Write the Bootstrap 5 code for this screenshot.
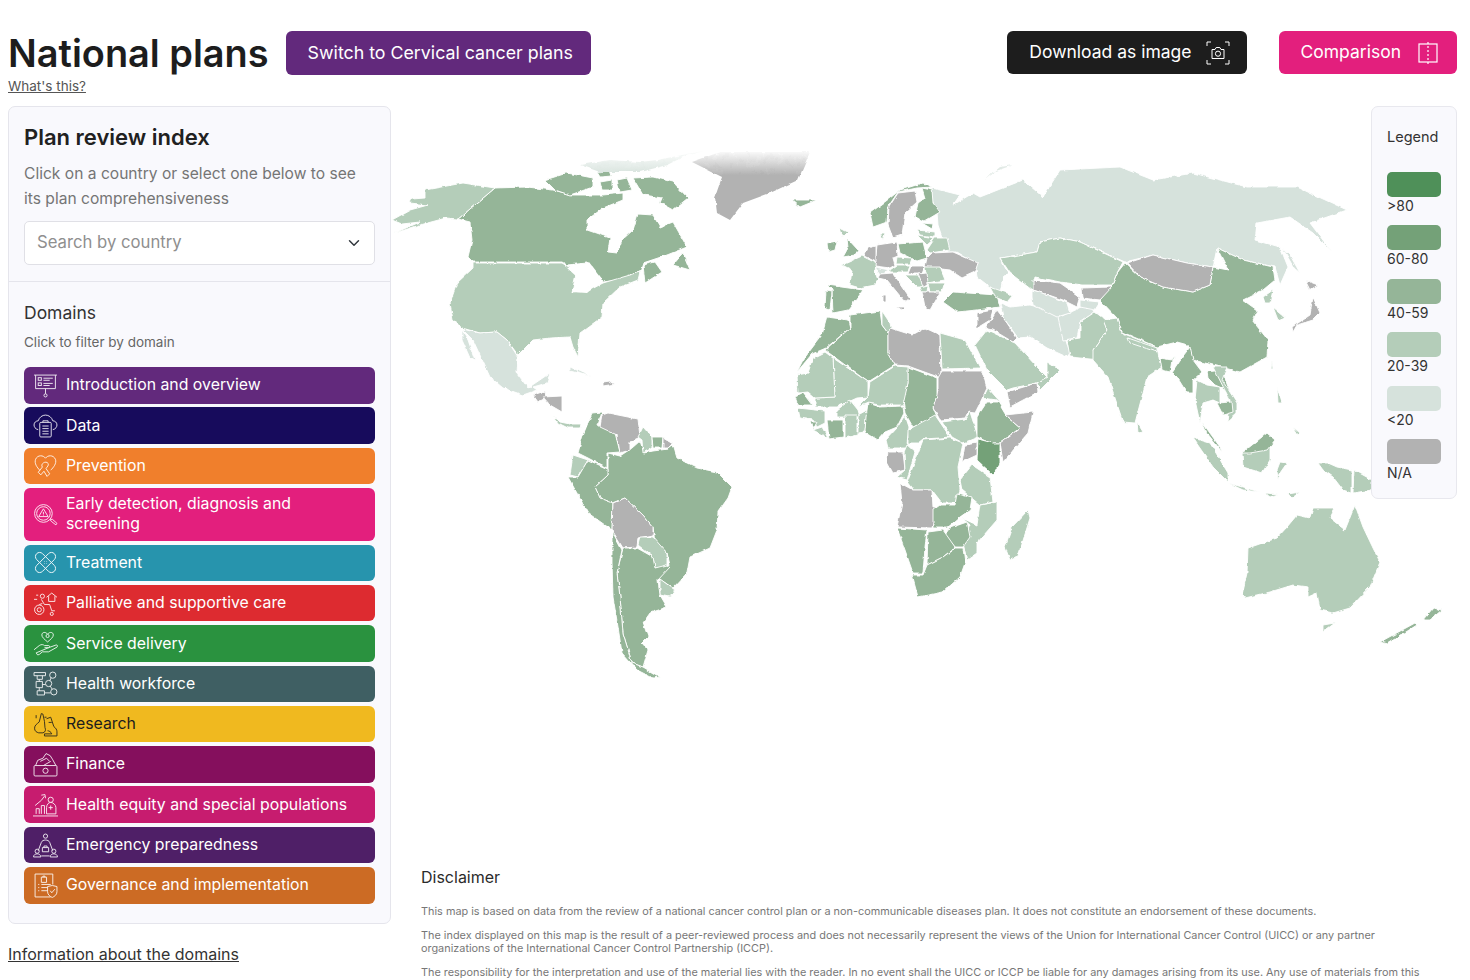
<!DOCTYPE html>
<html lang="en">
<head>
  <meta charset="UTF-8" />
  <meta name="viewport" content="width=device-width, initial-scale=1" />
  <title>National plans</title>
  <link href="https://cdn.jsdelivr.net/npm/bootstrap@5.3.0/dist/css/bootstrap.min.css" rel="stylesheet" />
  <style>
    html, body { height: 980px; overflow: hidden; }
    body { font-family: Inter, "Liberation Sans", sans-serif; color: #212121; background: #fff; }
    .page-wrap { padding: 31px 13px 0 8px; }
    .page-title { font-size: 37.9px; font-weight: 600; line-height: 44px; margin: 0; color: #1d1d1d; }
    .whats-link { font-size: 13.5px; line-height: 20px; color: #555; display: block; margin-top: 1px; }
    .head-btn { height: 43px; font-size: 17.8px; border: 0; border-radius: 6px; color: #fff; padding: 0 22px; display: flex; align-items: center; }
    .head-btn:hover { color: #fff; }
    .btn-switch { background: #62297c; margin-left: 17px; height: 44px; padding-right: 18px; }
    .btn-download { background: #1d1d1d; gap: 14px; padding-right: 17px; font-size: 17.5px; }
    .btn-compare { background: #e31f7d; gap: 16px; padding-right: 18px; margin-left: 32px; font-size: 17.5px; }
    .main-flex { margin-top: 10px; }
    .side-col { width: 383px; flex: none; }
    .side-card { background: #f9f9fd; border: 1px solid #e5e5ec; border-radius: 7px; }
    .side-top { padding: 15px 15px 16px; border-bottom: 1px solid #e5e5ec; }
    .side-title { font-size: 22px; font-weight: 600; line-height: 30px; margin: 0 0 9px; }
    .side-text { font-size: 15.6px; line-height: 25px; color: #757575; margin: 0 0 10px; }
    .country-select { height: 44px; font-size: 16.7px; color: #8f8f8f; border-color: #e0e0e6; border-radius: 5px; }
    .side-bottom { padding: 18px 15px 19px; }
    .domains-title { font-size: 17.5px; line-height: 25px; margin: 0 0 7px; color: #333; }
    .domains-text { font-size: 13.5px; line-height: 20px; color: #666; margin: 0 0 15px; }
    .domain-list { gap: 3.8px; }
    .domain-btn { min-height: 36.5px; display: flex; align-items: center; gap: 8px; padding: 0 9px; border: 0; border-radius: 6px; font-size: 15.85px; line-height: 20px; color: #fff; text-align: left; }
    .domain-btn:hover { color: #fff; }
    .domain-btn svg { width: 25px; height: 25px; flex: none; fill: none; stroke: currentColor; stroke-width: .9; opacity: .9; }
    .domain-btn span { padding: 6.5px 0; }
    .info-link { display: block; margin-top: 19px; font-size: 16px; line-height: 22px; color: #333; }
    .map-col { min-width: 0; }
    .map-area { position: relative; height: 754px; }
    .world-map { display: block; width: 1066px; height: 754px; }
    .world-map polygon { stroke: #fff; stroke-width: .9; stroke-linejoin: round; }
    .m1 { fill: #4f9059; } .m2 { fill: #74a178; } .m3 { fill: #95b598; } .m4 { fill: #b4cdb9; } .m5 { fill: #d6e2dc; } .mn { fill: #b2b2b2; } .world-map .mw { fill: #fff; stroke: none; }
    .world-map .no-edge { stroke: none; }
    .legend-box { position: absolute; top: 0; right: 0; width: 86px; height: 393px; background: #f9f9fd; border: 1px solid #e8e8ee; border-radius: 7px; padding: 20px 15px 0; font-size: 14px; color: #333; }
    .legend-title { line-height: 20px; margin-bottom: 25px; font-size: 14.5px; }
    .legend-item { height: 53.4px; }
    .legend-swatch { display: block; width: 54px; height: 25px; border-radius: 5px; }
    .legend-label { display: block; line-height: 17px; }
    .disclaimer { padding: 7px 35px 0 30px; }
    .disclaimer h6 { font-size: 16px; font-weight: 400; line-height: 20px; margin: 0 0 18px; color: #2b2b2b; }
    .disclaimer p { font-size: 10.88px; line-height: 13px; margin: 0 0 11px; color: #777; }
  </style>
</head>
<body>
  <div class="page-wrap">
    <div class="d-flex align-items-start">
      <div>
        <h1 class="page-title">National plans</h1>
        <a class="whats-link" href="#">What's this?</a>
      </div>
      <a class="btn head-btn btn-switch" href="#">Switch to Cervical cancer plans</a>
      <a class="btn head-btn btn-download ms-auto" href="#">Download as image
        <svg width="24" height="24" viewBox="0 0 24 24" fill="none" stroke="currentColor" stroke-width="1"><path d="M5 1H1v4M19 1h4v4M5 23H1v-4M19 23h4v-4"/><path d="M6 8.5h3l1.2-2h3.6l1.2 2h3v9H6z"/><circle cx="12" cy="12.7" r="2.6"/></svg>
      </a>
      <a class="btn head-btn btn-compare" href="#">Comparison
        <svg width="22" height="22" viewBox="0 0 22 22" fill="none" stroke="currentColor" stroke-width="1.2"><rect x="2" y="2" width="18" height="18"/><path d="M11 0v22" stroke-dasharray="2 2"/></svg>
      </a>
    </div>

    <div class="d-flex main-flex">
      <div class="side-col">
        <div class="side-card">
          <div class="side-top">
            <h2 class="side-title">Plan review index</h2>
            <p class="side-text">Click on a country or select one below to see its plan comprehensiveness</p>
            <select class="form-select country-select"><option>Search by country</option></select>
          </div>
          <div class="side-bottom">
            <h3 class="domains-title fw-normal">Domains</h3>
            <p class="domains-text">Click to filter by domain</p>
            <div class="d-flex flex-column domain-list">
              <a class="btn domain-btn" style="background:#62297c" href="#"><svg viewBox="0 0 24 24"><path d="M1 2h22M2.5 2v13h19V2M12 15v5"/><circle cx="12" cy="21.5" r="1.5"/><rect x="5" y="4.5" width="3" height="2.5"/><rect x="5" y="9.5" width="3" height="2.5"/><path d="M10 5h9M10 7h6M10 10h9M10 12h6"/></svg>Introduction and overview</a>
              <a class="btn domain-btn" style="background:#170b5c" href="#"><svg viewBox="0 0 24 24"><path d="M5 16C2 15.500 1 13 1 11.500 1 9 3 7.500 5 7.500 6 4 9 2 12 2s6 2 7 5.500c2 0 4 1.500 4 4 0 1.500-1 4-4 4.500"/><rect x="6.500" y="9" width="11" height="14" rx="1"/><path d="M9.500 9V7.500h5V9M9 12.500h6M9 15h6M9 17.500h6M9 20h6"/></svg>Data</a>
              <a class="btn domain-btn" style="background:#f07f2c" href="#"><svg viewBox="0 0 24 24"><path d="M12 5C10 2 4.500 1.500 2.500 6c-1.500 4 1.500 8 4 10.500M12 5c2-3 7.500-3.500 9.500 1 1.500 4-2 8-4.500 10.500"/><path d="M10 9.500c1.500-1 3.500-1 4.500.5 1 2-1 3-2 5l3.500 5-2.500 2.500-3-5-3 3.500-2.500-2.500 4-5c-1-1.500-.5-3 1-4z"/></svg>Prevention</a>
              <a class="btn domain-btn" style="background:#e31f7d" href="#"><svg viewBox="0 0 24 24"><circle cx="10" cy="11" r="8.500"/><circle cx="10" cy="11" r="6.500"/><path d="M10 6.500l4.500 7.500h-9zM10 9.500v2.500M10 12.800v.5M16.500 17l1 1.500 4.500 3.500 1-1.500-4.500-4z"/></svg><span>Early detection, diagnosis and screening</span></a>
              <a class="btn domain-btn" style="background:#2794ad" href="#"><svg viewBox="0 0 24 24"><rect x="0" y="8" width="24" height="8" rx="4" transform="rotate(45 12 12)"/><rect x="0" y="8" width="24" height="8" rx="4" transform="rotate(-45 12 12)"/><path d="M11 11h.5M13 11h.5M11 13h.5M13 13h.5"/></svg>Treatment</a>
              <a class="btn domain-btn" style="background:#dd2b30" href="#"><svg viewBox="0 0 24 24"><circle cx="6" cy="18" r="4.500"/><circle cx="6" cy="18" r="2"/><path d="M8 8l3 5h5l2 6h3M9 12l-3 1M13 6l5-4 5 4M15 5v5h6V5M1 8h3M3 4h2"/><circle cx="9" cy="5" r="2"/><circle cx="18" cy="22" r="1.500"/></svg>Palliative and supportive care</a>
              <a class="btn domain-btn" style="background:#2a923f" href="#"><svg viewBox="0 0 24 24"><path d="M14 10.500C11 8 8.500 6 8.500 3.800 8.500 1 12 .5 14 3c2-2.500 5.500-2 5.500.8 0 2.200-2.500 4.200-5.500 6.700z"/><circle cx="14" cy="4.800" r="1.500"/><path d="M1 18l5-4c2-1.500 4-1 5 0h4c1 0 1.500 1.500 0 2h-4m4 0l7-2.500c1.500-.5 2 1 1 2l-8 4.500H9l-3 2.500-1.500.5L3 21z"/></svg>Service delivery</a>
              <a class="btn domain-btn" style="background:#3f5f63" href="#"><svg viewBox="0 0 24 24"><path d="M1 1.500h11v3H1zM4 4.500V8h5V4.500M3 10h6v6H3zM4 19h7v4H4z"/><circle cx="19" cy="4" r="3"/><circle cx="15" cy="12" r="3"/><circle cx="20" cy="20" r="3"/><path d="M6 16v3M9 13h3M17.500 6.500l-1.500 3M16.500 14.500l2 3M11 21h6M6 8v2"/></svg>Health workforce</a>
              <a class="btn domain-btn" style="background:#f0b91f;color:#1d1d1d" href="#"><svg viewBox="0 0 24 24"><path d="M8 1.500l-2 8c-2 2-4.500 3-4.500 6 0 3 2 4 4 4.500h4c2.500-.5 3-3 2-5L11 9 9.500 2zM3 6V3M11 5h2"/><path d="M13 6.500l4-1.500 3 9c2 1.500 3 3 3 5v4H11v-2h7c-.5-2-3-3-4-3M15 10h3"/></svg>Research</a>
              <a class="btn domain-btn" style="background:#850f5d" href="#"><svg viewBox="0 0 24 24"><rect x="1" y="13" width="22" height="10" rx="1"/><circle cx="12" cy="18" r="2.500"/><path d="M2.500 13l2-5 5-2 3-4.500 4 2 2.500 4 3 5.500M7 9l6-3 3 3M10 13l7-4"/></svg>Finance</a>
              <a class="btn domain-btn" style="background:#c71c6f" href="#"><svg viewBox="0 0 24 24"><path d="M0 23h24M3 21v-5h3v5M8 21v-8h3v8M2 13l6-5 3-4M8 3l3.500-.5L12 6"/><circle cx="17" cy="7.500" r="2.500"/><path d="M13 21v-6c0-3 2-5 4-5s5 2 5 5v6zM15 15h4M17 13v4"/></svg>Health equity and special populations</a>
              <a class="btn domain-btn" style="background:#4f1f67" href="#"><svg viewBox="0 0 24 24"><circle cx="12" cy="3" r="2"/><path d="M8 9c1-3 7-3 8 0l3 8M8 9l-3 8M9 14h6v4H9zM10.500 14v-1.500h3V14"/><circle cx="4" cy="17.500" r="2"/><circle cx="20" cy="17.500" r="2"/><path d="M.5 23c0-4 7-4 7 0zM16.500 23c0-4 7-4 7 0zM8 22h8"/></svg>Emergency preparedness</a>
              <a class="btn domain-btn" style="background:#cc6b24" href="#"><svg viewBox="0 0 24 24"><path d="M19 11V1H2v22h15"/><path d="M8 4h5v5H8zM9.500 4V3h2v1M5 11h1M5 14h1M5 17h1M8 11h9M8 14h6M8 17h6"/><path d="M14 13l4.500-1 4.500 1v5c0 3-2.500 4.500-4.500 5.500-2-1-4.500-2.500-4.500-5.500zM16.500 17l1.500 2 3-3.500"/></svg>Governance and implementation</a>
            </div>
          </div>
        </div>
        <a class="info-link" href="#">Information about the domains</a>
      </div>

      <div class="map-col flex-grow-1">
        <div class="map-area">
          <svg class="world-map" viewBox="391 106 1066 754" role="img" aria-label="World map of plan review index">
            <defs>
              <linearGradient id="iceFade" gradientUnits="userSpaceOnUse" x1="0" y1="150" x2="0" y2="175"><stop offset="0" stop-color="#fff"/><stop offset="1" stop-color="#b2b2b2"/></linearGradient>
              <linearGradient id="arcticFade" gradientUnits="userSpaceOnUse" x1="0" y1="150" x2="0" y2="175"><stop offset="0" stop-color="#fff"/><stop offset="1" stop-color="#d6e2dc"/></linearGradient>
              <filter id="coast" x="0" y="0" width="100%" height="100%" color-interpolation-filters="sRGB">
                <feTurbulence type="fractalNoise" baseFrequency="0.13" numOctaves="3" seed="4" result="noise"/>
                <feDisplacementMap in="SourceGraphic" in2="noise" scale="3.2" xChannelSelector="R" yChannelSelector="G"/>
                <feGaussianBlur stdDeviation="0.35"/>
              </filter>
            </defs>
            <g filter="url(#coast)">
            <!-- north america -->
            <polygon class="m3" points="495,188 527,187 553,190 572,195 603,195 623,193 623,200 603,208 587,220 587,230 610,238 608,252 617,253 622,240 633,230 638,214 653,215 660,227 673,222 687,247 667,255 643,263 640,272 617,280 603,282 597,275 587,263 567,265 562,262 473,262 468,257 472,240 470,222 458,219"/>
            <polygon class="m3" points="545,180 567,173 593,178 593,187 570,195 555,190"/>
            <polygon class="m3" points="633,178 653,177 673,182 688,198 673,210 660,203 662,198 643,195"/>
            <polygon class="m3" points="597,172 610,170 612,176 600,177"/>
            <polygon class="m3" points="617,180 627,178 632,190 620,192"/>
            <polygon class="m3" points="600,182 612,180 612,190 602,190"/>
            <polygon class="m3" points="673,265 683,253 690,270"/>
            <polygon class="m3" points="643,265 655,262 662,272 645,283"/>
            <polygon class="no-edge" fill="url(#arcticFade)" points="580,165 610,160 640,162 657,160 707,150 683,157 667,165 640,172 600,172"/>
            <polygon class="no-edge" fill="url(#arcticFade)" points="985,180 1000,167 1013,165 993,172"/>
            <polygon class="m4" points="425,190 463,183 495,188 458,219 446,218 420,225 392,234 420,222 402,224 392,220 410,210 428,205 410,203 412,199 425,198"/>
            <polygon class="m4" points="473,263 562,263 567,266 577,270 572,292 590,290 603,283 640,272 638,280 620,287 603,303 602,317 580,333 578,357 573,347 570,337 550,338 533,340 518,355 507,340 497,332 480,333 462,328 453,320 450,303 457,283 473,268"/>
            <polygon class="mw" points="567,268 590,263 603,280 587,293 572,292 577,277"/>
            <polygon class="m5" points="462,329 480,333 497,332 507,340 518,357 517,373 528,388 550,373 547,383 533,387 537,390 523,395 503,388 490,377 473,340"/>
            <polygon class="m5" points="462,330 468,340 475,360 470,358 462,340"/>
            <polygon class="mn" points="533,395 545,391 546,398 538,402"/>
            <polygon class="mn" points="543,397 562,396 562,412 550,405"/>
            <polygon class="m4" points="553,415 560,422 570,424 581,424 580,428 568,428 558,423"/>
            <polygon class="m5" points="570,367 593,377 585,375 570,371"/>
            <polygon class="mn" points="603,382 610,381 615,384 603,386"/>
            <polygon class="no-edge" fill="url(#iceFade)" points="692,162 720,152 810,152 798,180 770,193 743,203 730,220 717,213 715,197 722,177"/>
            <polygon class="m3" points="792,200 817,200 800,207"/>
            <!-- south america -->
            <polygon class="m3" points="608,453 620,456 632,448 640,441 644,453 653,451 668,449 673,445 677,458 697,468 717,472 732,487 728,498 718,512 717,530 710,548 690,557 687,573 673,588 658,578 670,565 667,553 655,543 653,527 643,515 625,498 612,503 600,498 595,487 608,475"/>
            <polygon class="m3" points="592,413 602,412 598,425 615,433 620,452 607,453 607,468 588,458 578,453 583,435"/>
            <polygon class="mn" points="602,415 608,413 638,419 640,437 630,442 630,450 620,453 617,435 600,427"/>
            <polygon class="m4" points="643,427 652,437 652,448 643,453 642,440 638,437"/>
            <polygon class="m3" points="652,437 663,437 662,448 653,448"/>
            <polygon class="mn" points="663,437 673,443 668,448 663,448"/>
            <polygon class="m4" points="573,455 588,460 578,477 570,475"/>
            <polygon class="m3" points="588,460 608,469 608,475 595,487 600,498 613,503 612,530 588,513 568,477 578,477"/>
            <polygon class="mn" points="613,503 625,498 643,515 653,527 653,535 638,538 637,547 623,548 612,530"/>
            <polygon class="m4" points="640,537 653,537 667,553 667,567 655,568 653,557 638,545"/>
            <polygon class="m4" points="660,579 675,590 670,597 660,595"/>
            <polygon class="m3" points="623,548 637,548 653,557 655,568 667,565 670,567 658,580 660,595 667,607 650,613 643,623 648,637 642,643 648,650 643,667 632,663 623,633 620,597 617,573"/>
            <polygon class="m3" points="612,531 622,550 617,573 620,597 623,633 632,663 643,667 660,677 653,678 637,670 622,653 618,627 613,597 612,563"/>
            <!-- africa -->
            <polygon class="m3" points="827,317 848,320 850,328 826,348 812,354 797,372 803,360 812,348 822,335"/>
            <polygon class="m3" points="850,315 880,311 882,325 888,333 888,353 895,365 868,382 825,350 850,328"/>
            <polygon class="m4" points="882,311 890,323 892,332 888,333 882,325"/>
            <polygon class="mn" points="890,328 912,335 925,328 940,335 941,378 908,366 895,365 888,353 888,333"/>
            <polygon class="m4" points="940,333 965,340 980,368 942,369"/>
            <polygon class="mn" points="942,371 982,371 987,388 980,403 975,413 968,412 965,418 940,420 933,407 938,390 938,378"/>
            <polygon class="m3" points="908,367 937,378 937,395 933,407 937,417 913,427 905,413 903,400 908,383"/>
            <polygon class="m4" points="895,366 908,367 908,383 903,405 880,405 868,403 858,407 868,397 870,382"/>
            <polygon class="m4" points="833,358 868,382 868,397 857,398 837,407 815,407 815,398 835,397"/>
            <polygon class="m4" points="825,352 833,358 835,397 815,398 808,392 798,393 797,375 808,373 813,358"/>
            <polygon class="m3" points="795,397 803,393 812,405 798,405"/>
            <polygon class="m4" points="798,408 825,411 825,423 817,427 813,420 800,418"/>
            <polygon class="m3" points="810,422 817,422 813,430"/>
            <polygon class="m4" points="813,430 822,427 828,438"/>
            <polygon class="m3" points="827,420 843,420 843,437 829,439"/>
            <polygon class="m4" points="837,410 850,400 858,410 860,417 837,417"/>
            <polygon class="m4" points="845,415 857,415 857,435 845,438"/>
            <polygon class="m4" points="858,415 867,410 865,432 858,433"/>
            <polygon class="m3" points="868,403 880,407 903,406 904,413 897,427 885,432 878,440 865,432 866,417"/>
            <polygon class="m4" points="905,415 909,427 907,443 910,448 888,448 886,440 897,428"/>
            <polygon class="m4" points="908,430 935,415 950,437 940,438 923,439 918,443 908,443"/>
            <polygon class="m4" points="942,422 965,419 970,412 978,437 963,443 952,437"/>
            <polygon class="m3" points="977,417 987,402 998,402 1007,417 1020,428 1000,443 990,443 977,437"/>
            <polygon class="m4" points="983,398 988,388 1003,405 997,400"/>
            <polygon class="mn" points="1005,415 1033,412 1028,433 1003,462 1000,443 1020,428"/>
            <polygon class="m2" points="978,439 993,443 1000,443 1000,462 993,475 977,460"/>
            <polygon class="mn" points="965,445 977,443 977,455 962,462"/>
            <polygon class="m4" points="923,440 950,438 963,443 958,467 960,490 955,503 942,503 932,490 913,490 907,482 918,453"/>
            <polygon class="mn" points="888,452 903,452 905,470 893,473 887,462"/>
            <polygon class="m4" points="907,445 915,452 907,480 897,477 905,470 904,452"/>
            <polygon class="m4" points="972,465 990,477 993,502 980,505 962,490 960,480"/>
            <polygon class="mn" points="900,483 913,490 932,490 933,508 937,507 932,528 897,527 902,503"/>
            <polygon class="m3" points="957,493 972,497 970,510 960,517 947,528 933,528 933,510 940,505 955,505"/>
            <polygon class="m4" points="980,505 997,502 997,520 977,543 977,553 967,560 963,543 970,525 962,518 977,525"/>
            <polygon class="m3" points="950,528 967,522 970,537 963,547 955,547 945,535"/>
            <polygon class="m3" points="897,528 927,530 925,547 923,573 913,573 905,550"/>
            <polygon class="m3" points="928,532 943,530 955,547 943,557 927,565"/>
            <polygon class="m3" points="923,575 927,565 943,557 955,548 963,548 965,563 960,577 943,592 918,597 912,575"/>
            <polygon class="m4" points="1028,510 1030,518 1018,557 1010,560 1005,547 1012,527"/>
            <!-- asia -->
            <polygon class="m5" points="932,188 960,195 953,205 973,193 980,197 1023,180 1043,197 1060,170 1120,167 1153,180 1193,173 1247,187 1297,187 1347,210 1310,223 1332,252 1313,233 1290,217 1257,223 1255,240 1280,247 1288,267 1280,285 1275,267 1243,260 1217,248 1213,267 1187,263 1153,255 1125,262 1080,242 1060,238 1040,242 1037,252 1000,258 1008,273 1003,277 1000,293 990,287 977,277 975,263 957,252 948,252 942,237 938,225 937,212 932,200"/>
            <polygon class="m5" points="1282,247 1290,255 1300,273 1294,268"/>
            <polygon class="m4" points="975,345 987,330 1015,343 1037,367 1047,377 1037,383 1013,388 1007,390 987,370"/>
            <polygon class="mn" points="1007,392 1037,383 1038,392 1010,407"/>
            <polygon class="m4" points="1047,362 1060,370 1040,390 1037,383 1047,377"/>
            <polygon class="mn" points="997,310 1007,323 1017,338 1013,342 993,330 985,328 993,317"/>
            <polygon class="mn" points="977,313 993,310 990,320 977,328"/>
            <polygon class="m3" points="943,302 953,292 997,295 1000,307 977,310 957,312"/>
            <polygon class="m5" points="1000,303 1010,307 1030,305 1060,313 1063,330 1070,353 1067,357 1047,348 1030,337 1018,338 1003,317"/>
            <polygon class="m5" points="1090,303 1095,312 1080,322 1077,338 1063,340 1058,318 1070,312"/>
            <polygon class="m4" points="1095,312 1103,318 1107,330 1093,350 1100,360 1070,357 1067,340 1080,338 1080,322"/>
            <polygon class="m4" points="1103,320 1117,318 1122,333 1157,347 1160,363 1177,357 1147,377 1135,423 1123,422 1108,377 1093,360 1093,350 1107,330"/>
            <polygon class="m4" points="1137,422 1143,432 1138,433"/>
            <polygon class="m4" points="1128,338 1157,348 1157,352 1130,343"/>
            <polygon class="m3" points="1160,358 1172,360 1170,372 1162,370"/>
            <polygon class="m3" points="1125,263 1140,277 1163,287 1193,292 1210,285 1213,267 1228,270 1217,248 1243,260 1273,267 1275,280 1263,290 1243,300 1257,310 1252,320 1268,340 1267,357 1240,372 1213,365 1193,360 1188,345 1177,342 1157,347 1122,332 1117,318 1100,300 1113,283 1117,273"/>
            <polygon class="mn" points="1127,263 1153,255 1187,263 1213,267 1210,285 1193,292 1163,287 1140,277"/>
            <polygon class="m4" points="1000,258 1037,252 1040,242 1060,238 1080,242 1123,262 1117,273 1112,285 1083,285 1060,282 1035,277 1032,290 1010,273"/>
            <polygon class="mn" points="1033,280 1060,283 1080,297 1077,307 1063,300 1043,293 1033,290"/>
            <polygon class="mn" points="1082,288 1112,287 1100,300 1083,298"/>
            <polygon class="m5" points="1080,300 1100,302 1095,310 1080,307"/>
            <polygon class="m5" points="1032,290 1043,293 1067,303 1070,313 1057,317 1033,305 1032,297"/>
            <polygon class="m4" points="990,287 1013,295 1007,302 995,297"/>
            <polygon class="m4" points="1263,297 1273,290 1270,303 1265,303"/>
            <polygon class="m4" points="1273,307 1285,317 1278,320"/>
            <polygon class="mn" points="1313,297 1320,313 1313,320 1297,325 1293,332 1292,327 1310,315"/>
            <polygon class="mn" points="1305,280 1318,285 1310,290"/>
            <polygon class="m3" points="1190,347 1193,360 1202,372 1193,380 1193,393 1187,393 1177,377 1172,372 1180,360"/>
            <polygon class="m4" points="1197,380 1207,385 1220,387 1220,403 1213,400 1203,403 1200,423 1195,400"/>
            <polygon class="m3" points="1207,372 1222,370 1232,398 1222,388 1215,385 1208,378"/>
            <polygon class="m4" points="1213,367 1227,367 1222,380 1237,403 1237,413 1227,422 1228,413 1230,400"/>
            <polygon class="m3" points="1217,403 1232,402 1233,412 1223,415"/>
            <polygon class="m3" points="1202,422 1220,447 1222,452 1207,433"/>
            <polygon class="m4" points="1193,438 1210,443 1228,473 1228,482 1213,467"/>
            <polygon class="m4" points="1228,483 1260,492 1243,490"/>
            <polygon class="m4" points="1265,493 1278,494 1270,497"/>
            <polygon class="m4" points="1288,494 1300,492 1292,498"/>
            <polygon class="m4" points="1242,453 1270,447 1270,460 1262,473 1243,467"/>
            <polygon class="m3" points="1242,453 1267,433 1275,440 1267,450 1250,453"/>
            <polygon class="m4" points="1277,470 1280,462 1287,463 1280,473 1278,480"/>
            <polygon class="m4" points="1277,387 1282,403 1278,403"/>
            <polygon class="m4" points="1293,427 1300,433 1298,435"/>
            <polygon class="m4" points="1272,360 1273,368 1271,368"/>
            <polygon class="m4" points="1318,463 1328,463 1337,467 1352,470 1352,493 1343,490 1333,477 1323,470"/>
            <polygon class="m4" points="1354,470 1372,480 1372,490 1353,493"/>
            <!-- oceania -->
            <polygon class="m4" points="1248,548 1277,538 1287,527 1297,515 1310,518 1313,508 1335,508 1330,518 1345,530 1355,505 1363,527 1373,548 1380,562 1370,587 1350,608 1333,613 1320,610 1317,593 1308,597 1308,587 1293,585 1270,592 1245,598 1242,595 1247,573"/>
            <polygon class="m4" points="1323,625 1335,623 1323,632"/>
            <polygon class="m3" points="1380,642 1415,623 1417,625 1387,644"/>
            <polygon class="m3" points="1423,620 1433,608 1442,610 1430,620"/>
            <!-- europe -->
            <polygon class="m3" points="870,213 890,198 900,190 923,183 932,187 917,188 898,192 888,207 887,222 873,227"/>
            <polygon class="mn" points="898,193 915,191 917,202 905,213 902,235 893,238 888,225 889,207"/>
            <polygon class="m3" points="922,188 932,190 933,203 940,212 925,221 915,217 918,203 925,198"/>
            <polygon class="m3" points="847,238 858,250 855,255 843,257 848,248"/>
            <polygon class="m3" points="827,243 837,241 835,250 828,252"/>
            <polygon class="m4" points="840,228 848,232 843,237"/>
            <polygon class="m4" points="880,233 885,233 883,240"/>
            <polygon class="m4" points="862,256 876,263 875,272 878,280 875,285 860,288 850,285 852,270 842,265"/>
            <polygon class="m3" points="827,285 863,290 852,305 848,310 833,313 832,290"/>
            <polygon class="m3" points="826,290 832,291 830,310 825,308"/>
            <polygon class="mn" points="877,245 897,242 898,256 893,258 895,265 890,268 875,266"/>
            <polygon class="mn" points="868,248 876,246 876,262 864,256"/>
            <polygon class="m3" points="898,244 923,242 927,258 917,261 900,253"/>
            <polygon class="m4" points="927,250 935,238 947,238 950,250 930,253"/>
            <polygon class="m4" points="917,235 935,238 927,245"/>
            <polygon class="m3" points="922,223 933,224 932,229"/>
            <polygon class="m4" points="917,230 935,232 935,237 920,235"/>
            <polygon class="mn" points="927,258 932,253 953,252 978,263 975,272 962,278 950,270 925,267"/>
            <polygon class="m4" points="897,257 912,258 910,264 896,264"/>
            <polygon class="m4" points="890,270 897,265 910,265 908,272 890,272"/>
            <polygon class="m5" points="875,267 889,270 880,274"/>
            <polygon class="mn" points="911,266 925,266 922,274 908,274"/>
            <polygon class="m4" points="925,267 940,267 945,280 927,283"/>
            <polygon class="m4" points="928,283 945,283 942,292 930,292"/>
            <polygon class="mn" points="880,274 893,273 910,298 905,302 887,280 878,278"/>
            <polygon class="mn" points="897,307 905,307 902,310"/>
            <polygon class="mn" points="883,295 886,295 886,302 883,302"/>
            <polygon class="m4" points="905,275 918,275 925,287 917,287"/>
            <polygon class="mn" points="918,274 927,273 928,283 923,287"/>
            <polygon class="m4" points="920,287 928,285 927,292 922,292"/>
            <polygon class="mn" points="922,292 940,292 930,310 925,307"/>
            </g>
          </svg>
          <div class="legend-box">
            <div class="legend-title">Legend</div>
            <div class="legend-item"><span class="legend-swatch" style="background:#4f9059"></span><span class="legend-label">&gt;80</span></div>
            <div class="legend-item"><span class="legend-swatch" style="background:#74a178"></span><span class="legend-label">60-80</span></div>
            <div class="legend-item"><span class="legend-swatch" style="background:#95b598"></span><span class="legend-label">40-59</span></div>
            <div class="legend-item"><span class="legend-swatch" style="background:#b4cdb9"></span><span class="legend-label">20-39</span></div>
            <div class="legend-item"><span class="legend-swatch" style="background:#d6e2dc"></span><span class="legend-label">&lt;20</span></div>
            <div class="legend-item"><span class="legend-swatch" style="background:#b2b2b2"></span><span class="legend-label">N/A</span></div>
          </div>
        </div>
        <div class="disclaimer">
          <h6>Disclaimer</h6>
          <p>This map is based on data from the review of a national cancer control plan or a non-communicable diseases plan. It does not constitute an endorsement of these documents.</p>
          <p>The index displayed on this map is the result of a peer-reviewed process and does not necessarily represent the views of the Union for International Cancer Control (UICC) or any partner organizations of the International Cancer Control Partnership (ICCP).</p>
          <p>The responsibility for the interpretation and use of the material lies with the reader. In no event shall the UICC or ICCP be liable for any damages arising from its use. Any use of materials from this</p>
        </div>
      </div>
    </div>
  </div>
  <script src="https://cdn.jsdelivr.net/npm/bootstrap@5.3.0/dist/js/bootstrap.bundle.min.js"></script>
</body>
</html>
